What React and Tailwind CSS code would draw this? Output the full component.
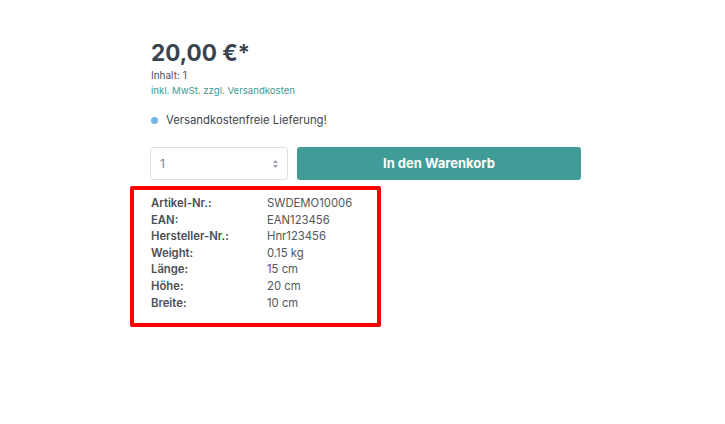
import React from 'react';

const rows = [
    ['Artikel-Nr.:', 'SWDEMO10006'],
    ['EAN:', 'EAN123456'],
    ['Hersteller-Nr.:', 'Hnr123456'],
    ['Weight:', '0.15 kg'],
    ['Länge:', '15 cm'],
    ['Höhe:', '20 cm'],
    ['Breite:', '10 cm'],
];

const App = () => {
    return (
        <div className="w-[725px] h-[424px] bg-white font-['Inter',sans-serif] overflow-hidden">
            <div className="pl-[150px] pt-[39px] w-[581px]">
                <div className="text-[22.5px] leading-[28px] font-bold text-[#3a4350] pl-px">20,00 €*</div>
                <div className="mt-[1px] text-[10px] leading-[15px] text-[#4a4f57] pl-px">Inhalt: 1</div>
                <div className="text-[9.6px] leading-[15px] text-[#3b9b93] pl-px">inkl. MwSt. zzgl. Versandkosten</div>

                <div className="mt-[14px] flex items-center gap-[8px] pl-[1px] h-[16px]">
                    <span className="w-[7px] h-[7px] rounded-full bg-[#74b4e8]" />
                    <span className="text-[11.3px] leading-[16px] text-[#3f444b]">Versandkostenfreie Lieferung!</span>
                </div>

                <div className="mt-[19px] flex gap-[9px] h-[33px]">
                    <div className="w-[138px] flex items-center justify-between border border-[#dbe1e8] rounded-[3px] pl-[9px] pr-[8px]">
                        <span className="text-[12px] text-[#7a828c]">1</span>
                        <svg width="7" height="10" viewBox="0 0 7 10" className="text-[#9aa1aa]">
                            <path d="M3.5 1 L6 4 H1 Z" fill="currentColor" />
                            <path d="M3.5 9 L6 6 H1 Z" fill="currentColor" />
                        </svg>
                    </div>
                    <button className="flex-1 rounded-[3px] bg-[#419b97] text-white text-[13px] font-bold">
                        In den Warenkorb
                    </button>
                </div>
            </div>

            <div className="ml-[130px] mt-[6px] w-[251px] h-[141px] border-[4px] border-[#ff0000] rounded-[2px] pl-[17px] pt-[5px]">
                {rows.map(([label, value]) => (
                    <div key={label} className="flex text-[11.3px] leading-[16.6px]">
                        <span className="w-[116px] font-semibold text-[#4b4f55]">{label}</span>
                        <span className="text-[#51565c]">{value}</span>
                    </div>
                ))}
            </div>
        </div>
    );
};

export default App;
